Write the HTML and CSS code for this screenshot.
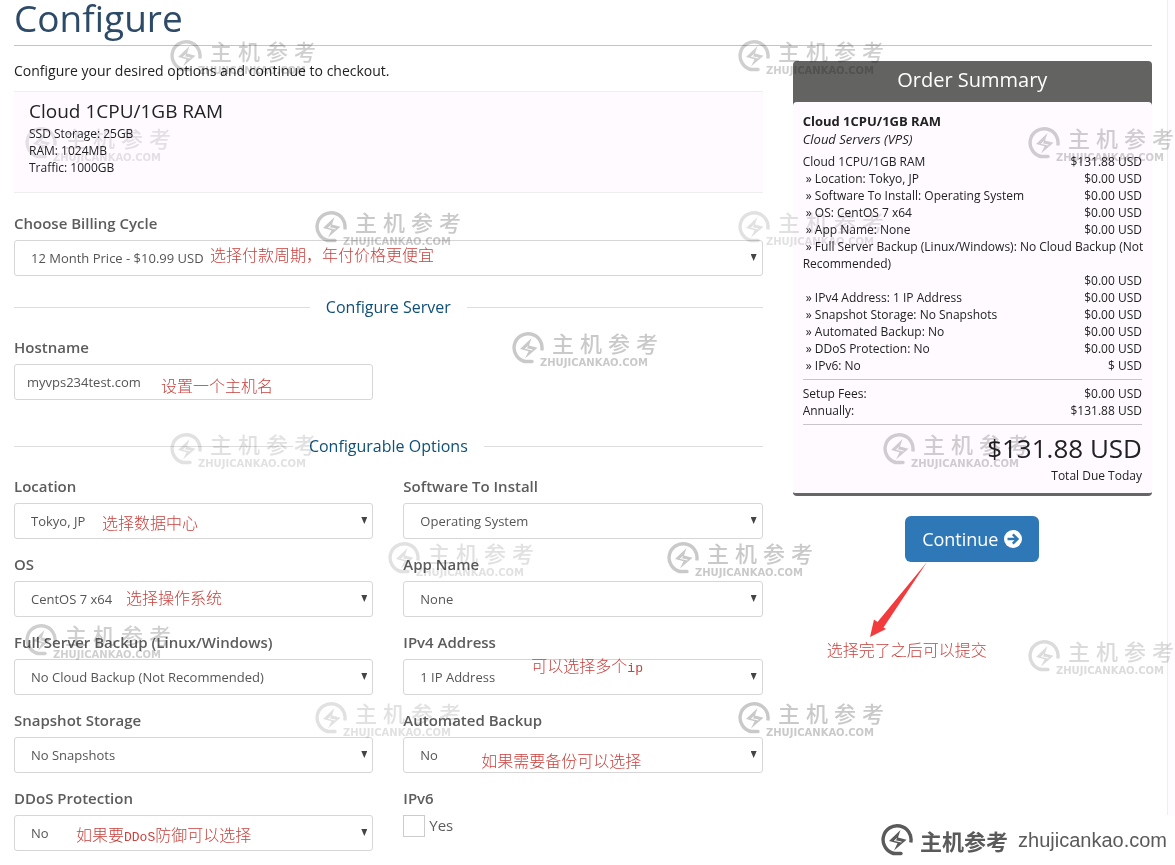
FILE: index.html
```html
<!DOCTYPE html>
<html lang="en">
<head>
<meta charset="utf-8">
<title>Configure</title>
<meta name="viewport" content="width=device-width, initial-scale=1">
<link rel="stylesheet" href="styles.css">
</head>
<body>
<svg class="defs" aria-hidden="true">
  <symbol id="bolt" viewBox="0 0 32 32">
    <path d="M13 29.400A14 14 0 1 1 29.800 18.500" fill="none" stroke="currentColor" stroke-width="3.400"/>
    <path d="M12 29.500h8" stroke="currentColor" stroke-width="3.400" stroke-linecap="round"/>
    <path d="M19.500 6 8 17l8.500 2.200L13 26.500 25.500 15.800 17 13.500z" fill="currentColor"/>
    <path d="M16 14.500 13.500 16.500l7 1.500" fill="none" stroke="#fff" stroke-width="1"/>
  </symbol>
</svg>
<div class="page">
  <header class="page-header"><h1>Configure</h1></header>
  <form class="layout">
    <main>
      <p class="intro">Configure your desired options and continue to checkout.</p>
      <section class="product">
        <h2>Cloud 1CPU/1GB RAM</h2>
        <p>SSD Storage: 25GB<br>RAM: 1024MB<br>Traffic: 1000GB</p>
      </section>

      <div class="field">
        <label for="cycle">Choose Billing Cycle</label>
        <div class="control select"><select id="cycle"><option>12 Month Price - $10.99 USD</option></select>
          <span class="note note-cycle" lang="zh">选择付款周期，年付价格更便宜</span></div>
      </div>

      <h3 class="divider"><span>Configure Server</span></h3>
      <div class="fields">
        <div class="field">
          <label for="host">Hostname</label>
          <div class="control"><input id="host" type="text" value="myvps234test.com">
            <span class="note note-host" lang="zh">设置一个主机名</span></div>
        </div>
      </div>

      <h3 class="divider"><span>Configurable Options</span></h3>
      <div class="fields">
        <div class="field">
          <label for="loc">Location</label>
          <div class="control select"><select id="loc"><option>Tokyo, JP</option></select>
            <span class="note note-loc" lang="zh">选择数据中心</span></div>
        </div>
        <div class="field">
          <label for="soft">Software To Install</label>
          <div class="control select"><select id="soft"><option>Operating System</option></select></div>
        </div>
        <div class="field">
          <label for="os">OS</label>
          <div class="control select"><select id="os"><option>CentOS 7 x64</option></select>
            <span class="note note-os" lang="zh">选择操作系统</span></div>
        </div>
        <div class="field">
          <label for="app">App Name</label>
          <div class="control select"><select id="app"><option>None</option></select></div>
        </div>
        <div class="field">
          <label for="full">Full Server Backup (Linux/Windows)</label>
          <div class="control select"><select id="full"><option>No Cloud Backup (Not Recommended)</option></select></div>
        </div>
        <div class="field">
          <label for="ipv4">IPv4 Address</label>
          <div class="control select"><select id="ipv4"><option>1 IP Address</option></select>
            <span class="note note-ip" lang="zh">可以选择多个<span class="latin">ip</span></span></div>
        </div>
        <div class="field">
          <label for="snap">Snapshot Storage</label>
          <div class="control select"><select id="snap"><option>No Snapshots</option></select></div>
        </div>
        <div class="field">
          <label for="auto">Automated Backup</label>
          <div class="control select"><select id="auto"><option>No</option></select>
            <span class="note note-auto" lang="zh">如果需要备份可以选择</span></div>
        </div>
        <div class="field">
          <label for="ddos">DDoS Protection</label>
          <div class="control select"><select id="ddos"><option>No</option></select>
            <span class="note note-ddos" lang="zh">如果要<span class="latin">DDoS</span>防御可以选择</span></div>
        </div>
        <fieldset class="field">
          <legend>IPv6</legend>
          <label class="check"><input type="checkbox"> Yes</label>
        </fieldset>
      </div>
    </main>

    <aside>
      <section class="summary">
        <h2>Order Summary</h2>
        <div class="summary-body">
          <strong class="name">Cloud 1CPU/1GB RAM</strong>
          <em class="category">Cloud Servers (VPS)</em>
          <ul class="lines">
            <li><span class="item">Cloud 1CPU/1GB RAM</span><span class="price">$131.88 USD</span></li>
            <li><span class="item">&nbsp;» Location: Tokyo, JP</span><span class="price">$0.00 USD</span></li>
            <li><span class="item">&nbsp;» Software To Install: Operating System</span><span class="price">$0.00 USD</span></li>
            <li><span class="item">&nbsp;» OS: CentOS 7 x64</span><span class="price">$0.00 USD</span></li>
            <li><span class="item">&nbsp;» App Name: None</span><span class="price">$0.00 USD</span></li>
            <li><span class="item">&nbsp;» Full Server Backup (Linux/Windows): No Cloud Backup (Not Recommended)</span><span class="price">$0.00 USD</span></li>
            <li><span class="item">&nbsp;» IPv4 Address: 1 IP Address</span><span class="price">$0.00 USD</span></li>
            <li><span class="item">&nbsp;» Snapshot Storage: No Snapshots</span><span class="price">$0.00 USD</span></li>
            <li><span class="item">&nbsp;» Automated Backup: No</span><span class="price">$0.00 USD</span></li>
            <li><span class="item">&nbsp;» DDoS Protection: No</span><span class="price">$0.00 USD</span></li>
            <li><span class="item">&nbsp;» IPv6: No</span><span class="price">$ USD</span></li>
          </ul>
          <ul class="lines totals">
            <li><span class="item">Setup Fees:</span><span class="price">$0.00 USD</span></li>
            <li><span class="item">Annually:</span><span class="price">$131.88 USD</span></li>
          </ul>
          <p class="amount">$131.88 USD</p>
          <p class="due">Total Due Today</p>
        </div>
      </section>
      <div class="actions">
        <button type="submit">Continue
          <svg viewBox="0 0 18 18" aria-hidden="true"><circle cx="9" cy="9" r="9" fill="#fff"/><path d="M3.500 9h9.500M8.800 4.300 13.500 9l-4.700 4.700" fill="none" stroke="#2e78b7" stroke-width="2.400"/></svg>
        </button>
        <svg class="pointer" viewBox="0 0 58 76" aria-hidden="true"><path d="M57 0 13.500 65.500 16 67 0 75 4 57.500 7.500 60z" fill="#f33a3d"/></svg>
        <span class="note note-submit" lang="zh">选择完了之后可以提交</span>
      </div>
    </aside>
  </form>
</div>

<div class="marks" id="marks" aria-hidden="true"></div>
<div class="brand"><svg><use href="#bolt"/></svg><b lang="zh">主机参考</b><span>zhujicankao.com</span></div>
<script src="marks.js"></script>
</body>
</html>
```
FILE: marks.js
```js
// Watermark stamps: left, top, strength
const stamps = [
  [170, 40, 0.8], [738, 40, 0.8], [25, 127, 0.45], [1028, 127, 0.8],
  [315, 211, 0.9], [738, 211, 0.5], [512, 332, 0.9], [170, 433, 0.5],
  [883, 433, 0.8], [388, 542, 0.5], [667, 542, 0.9], [25, 624, 0.8],
  [1028, 640, 0.6], [315, 702, 0.5], [738, 702, 0.9]
];
document.getElementById("marks").innerHTML = stamps.map(([x, y, o]) =>
  `<div class="mark" style="left:${x}px;top:${y}px;opacity:${o}">
    <svg><use href="#bolt"/></svg>
    <div class="mark-text">
      <div class="mark-name" lang="zh"><span>主</span><span>机</span><span>参</span><span>考</span></div>
      <div class="mark-site">ZHUJICANKAO.COM</div>
    </div>
  </div>`).join("");
```
FILE: styles.css
```css
* { box-sizing: border-box; }
body {
  margin: 0;
  position: relative;
  overflow-x: hidden;
  background: #fffcff;
  color: #222;
  font: 14px/20px "Open Sans", "Noto Sans CJK SC", sans-serif;
}
h1, h2, h3, p, ul { margin: 0; padding: 0; font-weight: 400; }
ul { list-style: none; }
.defs { position: absolute; width: 0; height: 0; }

.page {
  min-height: 100vh;
  margin-right: 7px;
  padding: 0 15px 14px 14px;
  border-right: 1px solid #f3eaf3;
  background: #fff;
}
.page-header {
  margin-bottom: 15px;
  padding-bottom: 9px;
  border-bottom: 1px solid #c4c4c4;
}
h1 { color: #2d4a68; font-size: 37px; line-height: 36px; }
.layout {
  display: grid;
  grid-template-columns: minmax(0, 25fr) minmax(0, 12fr);
  gap: 30px;
  align-items: start;
}
.intro { margin-bottom: 10px; }

.product {
  margin-bottom: 20px;
  padding: 9px 15px 16px;
  border: solid #eee;
  border-width: 1px 0;
  background: #fffaff;
  font-size: 12px;
  line-height: 17px;
}
.product h2 { margin-bottom: 4px; font-size: 19px; line-height: 20px; }

.field { min-width: 0; margin: 0 0 15px; padding: 0; border: 0; }
.field > label, legend {
  display: block;
  margin-bottom: 7px;
  padding: 0;
  color: #5c5c5c;
  font-size: 15px;
  font-weight: 600;
}
.fields { display: grid; grid-template-columns: 1fr 1fr; column-gap: 30px; }
.control { position: relative; }
.control select, .control input {
  display: block;
  width: 100%;
  height: 36px;
  padding: 0 16px;
  border: 1px solid #d6d6d6;
  border-radius: 3px;
  background: #fff;
  color: #555;
  font: 13px/20px "Open Sans", sans-serif;
  appearance: none;
}
.control input { padding: 0 12px; }
.select::after {
  content: "";
  position: absolute;
  top: 14px;
  right: 6px;
  width: 6px;
  height: 7px;
  background: #444;
  clip-path: polygon(0 0, 100% 0, 50% 100%);
  pointer-events: none;
}
.field > .check { display: flex; gap: 4px; margin: 0; font-weight: 500; }
.check input {
  width: 22px;
  height: 22px;
  margin: 0;
  border: 1px solid #ccc;
  background: #fff;
  appearance: none;
}

.divider {
  display: flex;
  align-items: center;
  gap: 16px;
  margin: 21px 0 20px;
  color: #0e5078;
  font-size: 16px;
}
.divider::before, .divider::after { content: ""; flex: 1; height: 1px; background: #ddd; }

.summary {
  border-bottom: 3px solid #666;
  border-radius: 4px;
  background: #636361;
  overflow: hidden;
}
.summary h2 { padding: 7px 10px 10px; color: #fff; font-size: 20px; line-height: 24px; text-align: center; }
.summary-body {
  padding: 10px 10px 9px;
  border-radius: 4px 4px 0 0;
  background: #fffaff;
  font-size: 12px;
  line-height: 17px;
}
.name, .category { display: block; font-size: 13px; line-height: 18px; }
.category { margin-bottom: 5px; }
.lines li { display: flex; flex-wrap: wrap; justify-content: space-between; }
.item { margin-right: -4px; }
.price { margin-left: auto; }
.totals { margin: 5px 0; padding: 5px 0; border: solid #c8c4c8; border-width: 1px 0; }
.amount { font-size: 26px; line-height: 37px; text-align: right; }
.due { text-align: right; }

.actions { position: relative; margin-top: 20px; text-align: center; }
button {
  display: inline-flex;
  align-items: center;
  gap: 6px;
  padding: 11px 17px;
  border: 0;
  border-radius: 6px;
  background: #2e78b7;
  color: #fff;
  font: 18px/24px "Open Sans", sans-serif;
}
button svg { width: 18px; height: 18px; }

.note {
  position: absolute;
  color: #c8403c;
  font: 300 16px/20px "Noto Sans CJK SC", sans-serif;
  white-space: nowrap;
}
.latin { font: 13px/20px "Liberation Mono", monospace; }
.note-cycle { left: 196px; top: 4px; }
.note-host { left: 147px; top: 11px; }
.note-loc { left: 88px; top: 9px; }
.note-os { left: 112px; top: 6px; }
.note-ip { left: 128px; top: -4px; }
.note-auto { left: 78px; top: 13px; }
.note-ddos { left: 62px; top: 9px; }
.note-submit { left: 34px; top: 123px; }
.pointer { position: absolute; left: 77px; top: 46px; width: 58px; height: 76px; }

.marks {
  position: absolute;
  inset: 0;
  overflow: hidden;
  mix-blend-mode: multiply;
  pointer-events: none;
}
.mark { position: absolute; display: flex; color: #c4c4c4; }
.mark svg { width: 32px; height: 32px; }
.mark-text { margin-left: -4px; }
.mark-name {
  display: flex;
  gap: 6px;
  padding-left: 12px;
  font: 500 22px/20px "Noto Sans CJK SC", sans-serif;
}
.mark-site { margin-top: 6px; font: bold 10px/10px "DejaVu Sans", sans-serif; }

.brand {
  position: absolute;
  top: 815px;
  right: 0;
  display: flex;
  align-items: center;
  height: 50px;
  padding: 0 8px;
  background: #fff;
  color: #5a5a5a;
}
.brand svg { width: 32px; height: 32px; margin-right: 7px; }
.brand b { margin-right: 10px; font: bold 22px/32px "Noto Sans CJK SC", sans-serif; }
.brand span { font: 20px/32px "Liberation Sans", sans-serif; }
```
